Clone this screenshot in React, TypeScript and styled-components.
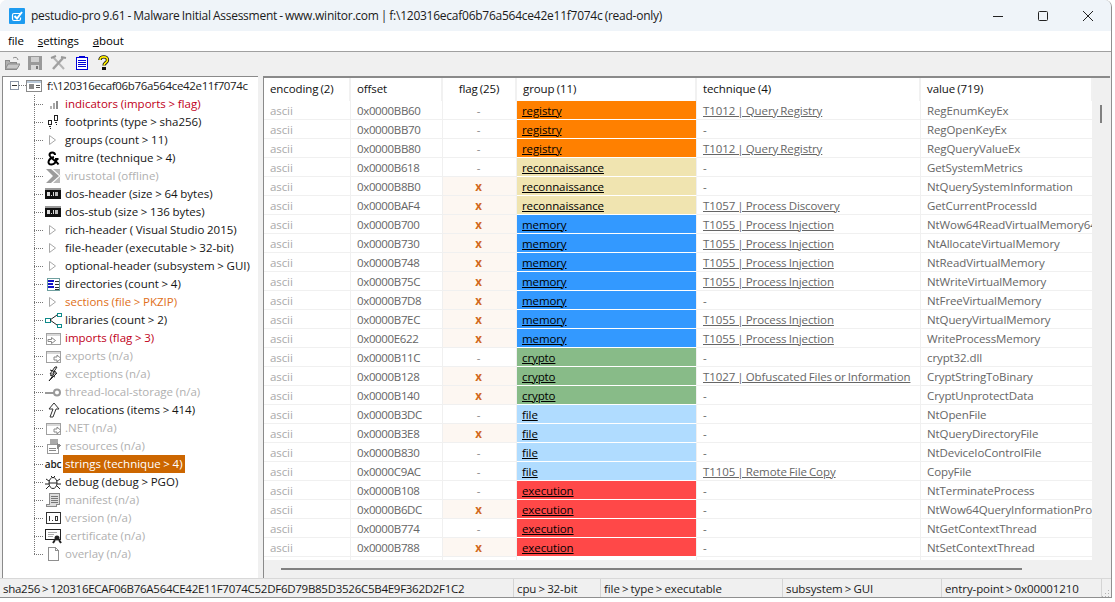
import React from "react";
import styled, { createGlobalStyle } from "styled-components";

const Global = createGlobalStyle`
  html, body { margin: 0; padding: 0; background: #fff; height: 100%; overflow: hidden; }
  #root { height: 100%; }
`;

const FONT = `"Open Sans", "Noto Sans", "Liberation Sans", sans-serif`;

const Window = styled.div`
  width: 1112px;
  height: 598px;
  display: flex;
  flex-direction: column;
  background: #f0f0f0;
  border-radius: 7px 7px 0 0;
  border: solid #8f8f8f;
  border-width: 0 1px 1px 0;
  box-sizing: border-box;
  overflow: hidden;
  font-family: ${FONT};
  font-size: 11.5px;
  letter-spacing: -0.1px;
  word-spacing: -0.7px;
  color: #111;
`;

const TitleBar = styled.div`
  height: 31px;
  flex: none;
  display: flex;
  align-items: center;
  background: #eff4f9;
  padding: 0 1px 0 9px;
  font-size: 12px;
  letter-spacing: -0.25px;
  color: #1a1a1a;
`;

const TitleText = styled.span`
  margin-left: 6px;
  flex: 1;
  white-space: nowrap;
`;

const WinButton = styled.div`
  width: 45px;
  height: 31px;
  display: flex;
  align-items: center;
  justify-content: center;
`;

const MenuBar = styled.div`
  height: 21px;
  flex: none;
  display: flex;
  align-items: center;
  gap: 14px;
  padding: 0 0 2px 8px;
  box-sizing: border-box;
  background: #fff;
  border-bottom: 1px solid #a0a0a0;
  color: #000;
  u { text-decoration-thickness: 1px; }
`;

const ToolBar = styled.div`
  height: 24px;
  flex: none;
  display: flex;
  align-items: center;
  gap: 7.5px;
  padding: 0 0 2px 4px;
  box-sizing: border-box;
  background: #f0f0f0;
`;

const Panes = styled.div`
  height: 502px;
  flex: none;
  display: flex;
  gap: 5px;
  padding-left: 2px;
`;

const TreePane = styled.div`
  width: 256px;
  flex: none;
  background: #fff;
  border-top: 1px solid #8a8a8a;
  border-left: 1px solid #8a8a8a;
  box-sizing: border-box;
  padding: 0 0 0 7px;
  letter-spacing: 0;
  word-spacing: -0.3px;
`;

const RootRow = styled.div`
  height: 18px;
  padding-bottom: 1px;
  box-sizing: border-box;
  display: flex;
  align-items: center;
  color: #1b1b1b;
  white-space: nowrap;
  letter-spacing: -0.34px;
`;

const Expander = styled.span`
  width: 9px;
  height: 9px;
  flex: none;
  box-sizing: border-box;
  border: 1px solid #8c97a8;
  display: flex;
  align-items: center;
  justify-content: center;
  &::after { content: ""; width: 5px; height: 1px; background: #333; }
`;

const RootDots = styled.span`
  width: 7px;
  flex: none;
  border-top: 1px dotted #777;
`;

const RootIcon = styled.span`
  width: 17px;
  height: 16px;
  flex: none;
  margin-right: 4px;
  display: flex;
`;

const Children = styled.div`
  margin-left: 24px;
  position: relative;
  &::before {
    content: "";
    position: absolute;
    left: 0;
    top: 0;
    bottom: 9px;
    border-left: 1px dotted #777;
  }
`;

const TreeRow = styled.div`
  height: 18px;
  display: flex;
  align-items: center;
  white-space: nowrap;
`;

const Branch = styled.span`
  width: 9px;
  flex: none;
  border-top: 1px dotted #777;
`;

const NodeIcon = styled.span`
  width: 20px;
  height: 16px;
  flex: none;
  display: flex;
  align-items: center;
  justify-content: center;
`;

const NODE_COLORS = {
  normal: "#151515",
  red: "#c00020",
  orange: "#e07020",
  off: "#b0b0b0",
};

const NodeLabel = styled.span<{ $tone: keyof typeof NODE_COLORS; $selected?: boolean }>`
  color: ${(p) => (p.$selected ? "#fff" : NODE_COLORS[p.$tone])};
  background: ${(p) => (p.$selected ? "#cc6600" : "transparent")};
  height: 18px;
  line-height: 18px;
  padding: 0 2px;
`;

const TablePane = styled.div`
  flex: 1;
  margin-right: 1px;
  position: relative;
  background: #f0f0f0;
  border-top: 2px solid #8a8a8a;
  border-left: 1px solid #8a8a8a;
  overflow: hidden;
`;

const Grid = styled.div`
  width: 829px;
  background: #fff;
`;

const COLUMNS = "87px 92px 74px 180px 224px 172px";

const HeaderRow = styled.div`
  height: 23px;
  display: grid;
  grid-template-columns: ${COLUMNS};
  background: #fff;
`;

const HeaderCell = styled.div<{ $center?: boolean }>`
  display: flex;
  align-items: center;
  justify-content: ${(p) => (p.$center ? "center" : "flex-start")};
  padding-left: ${(p) => (p.$center ? 0 : 6)}px;
  padding-bottom: 2px;
  color: #111;
  border-right: 2px solid #f1f1f1;
  white-space: nowrap;
`;

const Row = styled.div`
  height: 19px;
  display: grid;
  grid-template-columns: ${COLUMNS};
`;

const TailRow = styled(Row)`
  height: 3px;
`;

const Cell = styled.div<{ $tone?: string; $tight?: boolean }>`
  display: flex;
  align-items: center;
  padding-left: 6px;
  color: ${(p) => p.$tone ?? "#666"};
  letter-spacing: ${(p) => (p.$tight ? "-0.35px" : "inherit")};
  border-right: 1px solid #f0f0f0;
  border-bottom: 1px solid #f0f0f0;
  white-space: nowrap;
  overflow: hidden;
`;

const TailCell = styled.div`
  border-right: 1px solid #f0f0f0;
`;

const FlagCell = styled(Cell)<{ $on: boolean }>`
  padding-left: 0;
  padding-right: 2px;
  justify-content: center;
  background: ${(p) => (p.$on ? "#fdf7f2" : "#fff")};
  color: ${(p) => (p.$on ? "#d2691e" : "#888")};
  font-weight: ${(p) => (p.$on ? 700 : 400)};
`;

const GroupCell = styled(Cell)<{ $bg: string }>`
  background: ${(p) => p.$bg};
  color: #000;
  padding-left: 5px;
  text-decoration: underline;
  border-bottom: 1px solid #fff;
`;

const TechCell = styled(Cell)<{ $link: boolean }>`
  text-decoration: ${(p) => (p.$link ? "underline" : "none")};
`;

const VThumb = styled.div`
  position: absolute;
  left: 836px;
  top: 27px;
  width: 2px;
  height: 18px;
  background: #808080;
`;

const HThumb = styled.div`
  position: absolute;
  left: 17px;
  top: 490px;
  width: 741px;
  height: 2px;
  background: #808080;
`;

const StatusBar = styled.div`
  height: 19px;
  flex: none;
  display: flex;
  align-items: center;
  color: #1a1a1a;
  background: #f0f0f0;
  border-top: 1px solid #d8d8d8;
  box-sizing: border-box;
`;

const StatusCell = styled.div<{ $w: number; $tight?: boolean }>`
  width: ${(p) => p.$w}px;
  flex: none;
  height: 18px;
  line-height: 20px;
  padding-left: 3px;
  box-sizing: border-box;
  border-right: 1px solid #d4d4d4;
  letter-spacing: ${(p) => (p.$tight ? "-0.27px" : "inherit")};
  white-space: nowrap;
  overflow: hidden;
`;

const Grip = styled.span`
  display: flex;
  margin: auto 1px 0 auto;
`;

type IconProps = { children: React.ReactNode; w?: number; h?: number };
const Svg = ({ children, w = 16, h = 16 }: IconProps) => (
  <svg width={w} height={h} viewBox={`0 0 ${w} ${h}`} fill="none" shapeRendering="crispEdges">
    {children}
  </svg>
);

const Triangle = () => (
  <Svg>
    <path d="M4.5 3.5 L10.5 8 L4.5 12.5 Z" stroke="#a8a8a8" fill="#fff" shapeRendering="auto" />
  </Svg>
);

const Console = () => (
  <Svg w={17}>
    <rect x="0" y="2" width="16" height="11" fill="#111" />
    <rect x="0" y="2" width="16" height="2" fill="#9a9a9a" />
    <rect x="2" y="6" width="3" height="4" fill="#ddd" />
    <rect x="6" y="9" width="1" height="1" fill="#ddd" />
    <rect x="8" y="6" width="1" height="4" fill="#ddd" />
    <rect x="10" y="6" width="3" height="4" fill="#bbb" />
  </Svg>
);

const Box = ({ arrow }: { arrow: "in" | "out" }) => (
  <Svg w={17}>
    <path d="M1.5 3.5 H15.5 V14.5 H1.5 Z" stroke="#a0a0a0" fill="#fff" />
    <rect x="2" y="4" width="13" height="2" fill="#d8d8d8" />
    {arrow === "in" ? (
      <path d="M3 9.5 H6.5 V7.5 L10.5 10.5 L6.5 13.5 V11.5 H3 Z" stroke="#888" fill="#fff" shapeRendering="auto" />
    ) : (
      <path d="M9 9 H12 V7 L16 10.5 L12 14 V12 H9 Z" stroke="#888" fill="#fff" shapeRendering="auto" />
    )}
  </Svg>
);

const ICONS: Record<string, React.ReactNode> = {
  indicators: (
    <Svg>
      <rect x="5" y="10" width="2" height="3" fill="#b4b4b4" />
      <rect x="8" y="7" width="2" height="6" fill="#a8a8a8" />
      <rect x="11" y="5" width="2" height="8" fill="#8c8c8c" />
    </Svg>
  ),
  footprints: (
    <Svg>
      <path d="M3.5 6.5 h3 v4 h-3 z M4 12.5 h2 M4.5 14.5 h1" stroke="#222" />
      <path d="M9.5 1.5 h3 v5 h-3 z M10 8.5 h2 M10.5 10.5 h1" stroke="#222" />
    </Svg>
  ),
  tri: <Triangle />,
  amp: (
    <Svg>
      <path
        d="M10 5 C10 1.5 4.5 1.5 4.5 5 C4.5 7.5 12 11.5 13.5 14.5 M9 7 C3 8.5 1.5 14.5 6.5 14.5 C9.5 14.5 11 12 12 9 M13.5 9 H10"
        stroke="#000"
        strokeWidth="2"
        shapeRendering="auto"
      />
    </Svg>
  ),
  virustotal: (
    <svg width="16" height="16" viewBox="0 0 16 16">
      <path d="M1 1 H6 L14 8 L6 15 H1 L8 8 Z" fill="#9c9c9c" />
      <path d="M8 1 H15 V15 H8 L15.5 8 Z" fill="#7f7f7f" opacity="0.55" />
    </svg>
  ),
  console: <Console />,
  directories: (
    <Svg>
      <rect x="2.5" y="2.5" width="12" height="12" stroke="#6f9f9f" fill="#fff" />
      <path d="M3 5 H9 M3 8 H8 M3 11 H9" stroke="#1414c8" strokeWidth="2" />
      <path d="M10 5 H14 M10 8 H14 M10 11 H14 M10 13 H14" stroke="#333" />
    </Svg>
  ),
  libraries: (
    <Svg w={18}>
      <rect x="1" y="6" width="5" height="4" stroke="#0f8a8a" />
      <rect x="13" y="1" width="4" height="3" stroke="#0f8a8a" />
      <rect x="13" y="12" width="4" height="3" stroke="#0f8a8a" />
      <path d="M6 8 L13 3 M6 8 L13 13" stroke="#222" shapeRendering="auto" />
    </Svg>
  ),
  imports: <Box arrow="in" />,
  exports: <Box arrow="out" />,
  exceptions: (
    <Svg>
      <path d="M10 1 L5 8 L9 8 L4 15 L12 7 L8 7 L12 1 Z" fill="#fff" stroke="#222" shapeRendering="auto" />
      <path d="M5 4 L11 6 M5 9 L10 11" stroke="#222" shapeRendering="auto" />
    </Svg>
  ),
  tls: (
    <Svg w={18}>
      <path d="M1 9 H10" stroke="#999" strokeWidth="2" />
      <circle cx="13" cy="8.5" r="3" stroke="#999" strokeWidth="2" shapeRendering="auto" />
    </Svg>
  ),
  relocations: (
    <Svg>
      <path d="M9 1 L14 7 H11 L8 15 L5 15 L8 7 H4 Z" stroke="#333" fill="#fff" shapeRendering="auto" />
    </Svg>
  ),
  resources: (
    <Svg w={18}>
      <rect x="6" y="1" width="8" height="5" fill="#aaa" />
      <rect x="3" y="6" width="11" height="9" stroke="#999" fill="#fff" />
      <rect x="5" y="10" width="7" height="1" fill="#888" />
      <rect x="5" y="12" width="7" height="1" fill="#888" />
      <path d="M13 5 L17 7 L13 11 Z" fill="#888" />
    </Svg>
  ),
  strings: null,
  debug: (
    <Svg w={18}>
      <ellipse cx="9" cy="9" rx="4" ry="5.5" stroke="#222" fill="#fff" shapeRendering="auto" />
      <path d="M5 9 H13 M2 5 L5 7 M16 5 L13 7 M1 10 H5 M17 10 H13 M2 15 L5 12 M16 15 L13 12 M7 2 L9 4 L11 2" stroke="#222" shapeRendering="auto" />
    </Svg>
  ),
  manifest: (
    <Svg w={18}>
      <path d="M5.5 1.5 H15.5 V12.5 H12.5 V14.5 H2.5 V12.5 H5.5 Z" stroke="#8a8a8a" fill="#ddd" />
      <path d="M7 4 H14 M7 6 H14 M7 8 H14 M7 10 H14" stroke="#777" />
    </Svg>
  ),
  version: (
    <Svg w={15} h={12}>
      <rect x="0.5" y="0.5" width="14" height="11" stroke="#333" fill="#fff" />
      <path d="M3.5 3.5 V8.5 M6.5 8.5 V8 M9 4 H11 V8.5 H9 Z" stroke="#333" />
    </Svg>
  ),
  certificate: (
    <Svg w={17}>
      <rect x="0.5" y="1.5" width="15" height="10" stroke="#222" fill="#fff" />
      <path d="M3 4 H12 M3 6 H9 M3 8 H8" stroke="#aaa" />
      <circle cx="12" cy="10" r="2.5" fill="#222" shapeRendering="auto" />
      <path d="M10 12 L8 15 M14 12 L16 15" stroke="#222" strokeWidth="2" shapeRendering="auto" />
    </Svg>
  ),
  overlay: (
    <Svg>
      <path d="M3.5 1.5 H10.5 L13.5 4.5 V14.5 H3.5 Z M10.5 1.5 V4.5 H13.5" stroke="#8f8f8f" fill="#fff" />
    </Svg>
  ),
};

const AbcGlyph = styled.span`
  font-size: 10px;
  font-weight: 600;
  color: #222;
  letter-spacing: -0.2px;
`;

type Node = { icon: string; text: string; tone?: keyof typeof NODE_COLORS; selected?: boolean };

const TREE: Node[] = [
  { icon: "indicators", text: "indicators (imports > flag)", tone: "red" },
  { icon: "footprints", text: "footprints (type > sha256)" },
  { icon: "tri", text: "groups (count > 11)" },
  { icon: "amp", text: "mitre (technique > 4)" },
  { icon: "virustotal", text: "virustotal (offline)", tone: "off" },
  { icon: "console", text: "dos-header (size > 64 bytes)" },
  { icon: "console", text: "dos-stub (size > 136 bytes)" },
  { icon: "tri", text: "rich-header ( Visual Studio 2015)" },
  { icon: "tri", text: "file-header (executable > 32-bit)" },
  { icon: "tri", text: "optional-header (subsystem > GUI)" },
  { icon: "directories", text: "directories (count > 4)" },
  { icon: "tri", text: "sections (file > PKZIP)", tone: "orange" },
  { icon: "libraries", text: "libraries (count > 2)" },
  { icon: "imports", text: "imports (flag > 3)", tone: "red" },
  { icon: "exports", text: "exports (n/a)", tone: "off" },
  { icon: "exceptions", text: "exceptions (n/a)", tone: "off" },
  { icon: "tls", text: "thread-local-storage (n/a)", tone: "off" },
  { icon: "relocations", text: "relocations (items > 414)" },
  { icon: "exports", text: ".NET (n/a)", tone: "off" },
  { icon: "resources", text: "resources (n/a)", tone: "off" },
  { icon: "strings", text: "strings (technique > 4)", selected: true },
  { icon: "debug", text: "debug (debug > PGO)" },
  { icon: "manifest", text: "manifest (n/a)", tone: "off" },
  { icon: "version", text: "version (n/a)", tone: "off" },
  { icon: "certificate", text: "certificate (n/a)", tone: "off" },
  { icon: "overlay", text: "overlay (n/a)", tone: "off" },
];

const GROUP_BG: Record<string, string> = {
  registry: "#ff8000",
  reconnaissance: "#f0e4b0",
  memory: "#3399ff",
  crypto: "#88bb88",
  file: "#b0dcff",
  execution: "#ff4848",
};

const ROWS: [string, boolean, string, string, string][] = [
  ["0x0000BB60", false, "registry", "T1012 | Query Registry", "RegEnumKeyEx"],
  ["0x0000BB70", false, "registry", "-", "RegOpenKeyEx"],
  ["0x0000BB80", false, "registry", "T1012 | Query Registry", "RegQueryValueEx"],
  ["0x0000B618", false, "reconnaissance", "-", "GetSystemMetrics"],
  ["0x0000B8B0", true, "reconnaissance", "-", "NtQuerySystemInformation"],
  ["0x0000BAF4", true, "reconnaissance", "T1057 | Process Discovery", "GetCurrentProcessId"],
  ["0x0000B700", true, "memory", "T1055 | Process Injection", "NtWow64ReadVirtualMemory64"],
  ["0x0000B730", true, "memory", "T1055 | Process Injection", "NtAllocateVirtualMemory"],
  ["0x0000B748", true, "memory", "T1055 | Process Injection", "NtReadVirtualMemory"],
  ["0x0000B75C", true, "memory", "T1055 | Process Injection", "NtWriteVirtualMemory"],
  ["0x0000B7D8", true, "memory", "-", "NtFreeVirtualMemory"],
  ["0x0000B7EC", true, "memory", "T1055 | Process Injection", "NtQueryVirtualMemory"],
  ["0x0000E622", true, "memory", "T1055 | Process Injection", "WriteProcessMemory"],
  ["0x0000B11C", false, "crypto", "-", "crypt32.dll"],
  ["0x0000B128", true, "crypto", "T1027 | Obfuscated Files or Information", "CryptStringToBinary"],
  ["0x0000B140", true, "crypto", "-", "CryptUnprotectData"],
  ["0x0000B3DC", false, "file", "-", "NtOpenFile"],
  ["0x0000B3E8", true, "file", "-", "NtQueryDirectoryFile"],
  ["0x0000B830", false, "file", "-", "NtDeviceIoControlFile"],
  ["0x0000C9AC", false, "file", "T1105 | Remote File Copy", "CopyFile"],
  ["0x0000B108", false, "execution", "-", "NtTerminateProcess"],
  ["0x0000B6DC", true, "execution", "-", "NtWow64QueryInformationProcess"],
  ["0x0000B774", false, "execution", "-", "NtGetContextThread"],
  ["0x0000B788", true, "execution", "-", "NtSetContextThread"],
];

const AppIcon = () => (
  <svg width="16" height="16" viewBox="0 0 16 16">
    <rect width="16" height="16" rx="1" fill="#1d9bf0" />
    <path d="M12 5.5 H5 Q3.5 5.5 3.5 7 V11 Q3.5 12.5 5 12.5 H10 Q11.5 12.5 11.5 11 V9.5" fill="none" stroke="#fff" strokeWidth="1.2" />
    <path d="M5.5 8 L8 10.5 L13 4" fill="none" stroke="#fff" strokeWidth="2" />
  </svg>
);

const ToolIcons = () => (
  <>
    <Svg w={16}>
      <path d="M1.5 5.5 H5 L6 7 H12 V14 H1.5 Z" fill="#b0b0b0" stroke="#8a8a8a" />
      <path d="M4 9 H16 L13 14 H1.5 Z" fill="#c8c8c8" stroke="#8a8a8a" shapeRendering="auto" />
      <path d="M9 3 Q13 1 14 5" stroke="#8a8a8a" shapeRendering="auto" />
    </Svg>
    <Svg w={15}>
      <rect x="0" y="1" width="14" height="14" fill="#9a9a9a" />
      <rect x="3" y="2" width="8" height="5" fill="#d0d0d0" />
      <rect x="3" y="10" width="8" height="5" fill="#d8d8d8" />
      <rect x="8" y="11" width="2" height="3" fill="#777" />
    </Svg>
    <Svg w={17}>
      <path d="M3 2 L14 14" stroke="#b4b4b4" strokeWidth="2" shapeRendering="auto" />
      <path d="M13 3 L3 14" stroke="#a0a0a0" strokeWidth="2.5" shapeRendering="auto" />
      <path d="M1 3 L6 1 M11 2 L16 3" stroke="#999" strokeWidth="2" shapeRendering="auto" />
    </Svg>
    <Svg w={15}>
      <rect x="1.5" y="2.5" width="11" height="12" fill="#fff" stroke="#0000d8" />
      <rect x="4" y="1" width="6" height="2" fill="#0000d8" />
      <path d="M3 5.5 H11 M3 7.5 H11 M3 9.5 H11 M3 11.5 H11" stroke="#0000d8" />
    </Svg>
    <Svg w={16}>
      <path
        d="M3 5 C3 0.8 10.5 0.8 10.5 5 C10.5 8 7 7.5 7 10.5"
        stroke="#111"
        strokeWidth="3.4"
        shapeRendering="auto"
      />
      <path
        d="M3 5 C3 0.8 10.5 0.8 10.5 5 C10.5 8 7 7.5 7 10.5"
        stroke="#ffee00"
        strokeWidth="1.6"
        shapeRendering="auto"
      />
      <rect x="5" y="12" width="4" height="3" fill="#111" />
    </Svg>
  </>
);

export default function App() {
  return (
    <Window>
      <Global />
      <TitleBar>
        <AppIcon />
        <TitleText>
          pestudio-pro 9.61 - Malware Initial Assessment - www.winitor.com | f:\120316ecaf06b76a564ce42e11f7074c (read-only)
        </TitleText>
        <WinButton>
          <svg width="10" height="10"><path d="M0 5.5 H10" stroke="#222" /></svg>
        </WinButton>
        <WinButton>
          <svg width="10" height="10"><rect x=".5" y=".5" width="9" height="9" rx="1" fill="none" stroke="#222" /></svg>
        </WinButton>
        <WinButton>
          <svg width="10" height="10"><path d="M0 0 L10 10 M10 0 L0 10" stroke="#222" /></svg>
        </WinButton>
      </TitleBar>
      <MenuBar>
        <span>file</span>
        <span><u>s</u>ettings</span>
        <span><u>a</u>bout</span>
      </MenuBar>
      <ToolBar>
        <ToolIcons />
      </ToolBar>
      <Panes>
        <TreePane>
          <RootRow>
            <Expander />
            <RootDots />
            <RootIcon>
              <Svg w={17}>
                <rect x="0.5" y="2.5" width="15" height="11" fill="#fff" stroke="#8a8a8a" />
                <rect x="1" y="3" width="14" height="2" fill="#b8c8d8" />
                <rect x="3" y="6" width="5" height="5" fill="#8a8a8a" />
                <path d="M10 7 H14 M10 9 H14" stroke="#555" />
              </Svg>
            </RootIcon>
            f:\120316ecaf06b76a564ce42e11f7074c
          </RootRow>
          <Children>
            {TREE.map((n) => (
              <TreeRow key={n.text}>
                <Branch />
                <NodeIcon>{n.icon === "strings" ? <AbcGlyph>abc</AbcGlyph> : ICONS[n.icon]}</NodeIcon>
                <NodeLabel $tone={n.tone ?? "normal"} $selected={n.selected}>
                  {n.text}
                </NodeLabel>
              </TreeRow>
            ))}
          </Children>
        </TreePane>
        <TablePane>
          <Grid>
            <HeaderRow>
              <HeaderCell>encoding (2)</HeaderCell>
              <HeaderCell>offset</HeaderCell>
              <HeaderCell $center>flag (25)</HeaderCell>
              <HeaderCell>group (11)</HeaderCell>
              <HeaderCell>technique (4)</HeaderCell>
              <HeaderCell>value (719)</HeaderCell>
            </HeaderRow>
            {ROWS.map(([offset, flag, group, tech, value]) => (
              <Row key={offset}>
                <Cell $tone="#aaa">ascii</Cell>
                <Cell $tight>{offset}</Cell>
                <FlagCell $on={flag}>{flag ? "x" : "-"}</FlagCell>
                <GroupCell $bg={GROUP_BG[group]}>{group}</GroupCell>
                <TechCell $link={tech !== "-"}>{tech}</TechCell>
                <Cell>{value}</Cell>
              </Row>
            ))}
            <TailRow>
              <TailCell />
              <TailCell />
              <TailCell />
              <TailCell />
              <TailCell />
              <TailCell />
            </TailRow>
          </Grid>
          <VThumb />
          <HThumb />
        </TablePane>
      </Panes>
      <StatusBar>
        <StatusCell $w={514} $tight>sha256 &gt; 120316ECAF06B76A564CE42E11F7074C52DF6D79B85D3526C5B4E9F362D2F1C2</StatusCell>
        <StatusCell $w={87}>cpu &gt; 32-bit</StatusCell>
        <StatusCell $w={182}>file &gt; type &gt; executable</StatusCell>
        <StatusCell $w={159}>subsystem &gt; GUI</StatusCell>
        <StatusCell $w={160}>entry-point &gt; 0x00001210</StatusCell>
        <Grip>
          <svg width="8" height="8" shapeRendering="crispEdges">
            <path d="M6 1h1v1h-1z M3 4h1v1h-1z M6 4h1v1h-1z M0 7h1v1h-1z M3 7h1v1h-1z M6 7h1v1h-1z" fill="#b0b0b0" />
          </svg>
        </Grip>
      </StatusBar>
    </Window>
  );
}
